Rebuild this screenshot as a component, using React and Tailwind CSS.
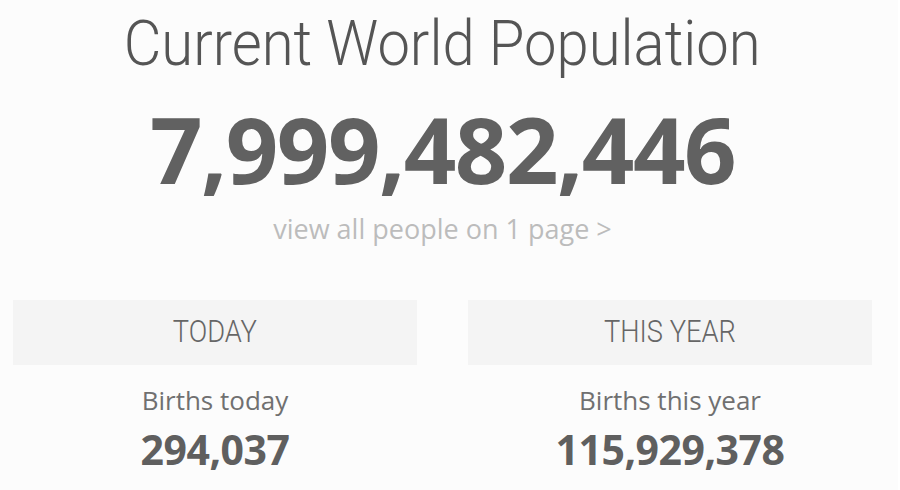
import React from 'react'

const stats = [
  { period: 'TODAY', label: 'Births today', value: '294,037' },
  { period: 'THIS YEAR', label: 'Births this year', value: '115,929,378' }
]

const StatColumn = ({ period, label, value }) => (
  <div className="flex flex-col items-center">
    <div className="w-full h-[65px] bg-[#f4f4f4] flex items-center justify-center">
      <span className="font-['Roboto',sans-serif] font-light text-[31px] text-[#666] origin-center scale-x-[0.88]">
        {period}
      </span>
    </div>
    <p className="mt-[19px] font-['Open_Sans',sans-serif] text-[26px] leading-[32px] text-[#707070]">
      {label}
    </p>
    <p className="mt-[8px] font-['Open_Sans',sans-serif] font-bold text-[41px] leading-[50px] tracking-[-0.5px] text-[#5f5f5f]">
      {value}
    </p>
  </div>
)

export default function App() {
  return (
    <div className="w-[900px] h-[490px] bg-[#fcfcfc] overflow-hidden flex">
      <main className="w-[885px] px-[13px] flex flex-col items-center">
        <h1 className="mt-[8px] font-['Roboto',sans-serif] font-light text-[63px] leading-[72px] text-[#555] scale-x-[0.92]">
          Current World Population
        </h1>
        <div className="mt-[14px] font-['Open_Sans',sans-serif] font-bold text-[92px] leading-[110px] tracking-[-1.5px] text-[#616161]">
          7,999,482,446
        </div>
        <a className="mt-[8px] font-['Open_Sans',sans-serif] text-[27px] leading-[34px] text-[#bcbcbc]">
          view all people on 1 page &gt;
        </a>
        <div className="mt-[54px] w-full grid grid-cols-2 gap-[51px]">
          {stats.map((s) => (
            <StatColumn key={s.period} {...s} />
          ))}
        </div>
      </main>
      <div className="flex-1 border-r-2 border-white" />
    </div>
  )
}
